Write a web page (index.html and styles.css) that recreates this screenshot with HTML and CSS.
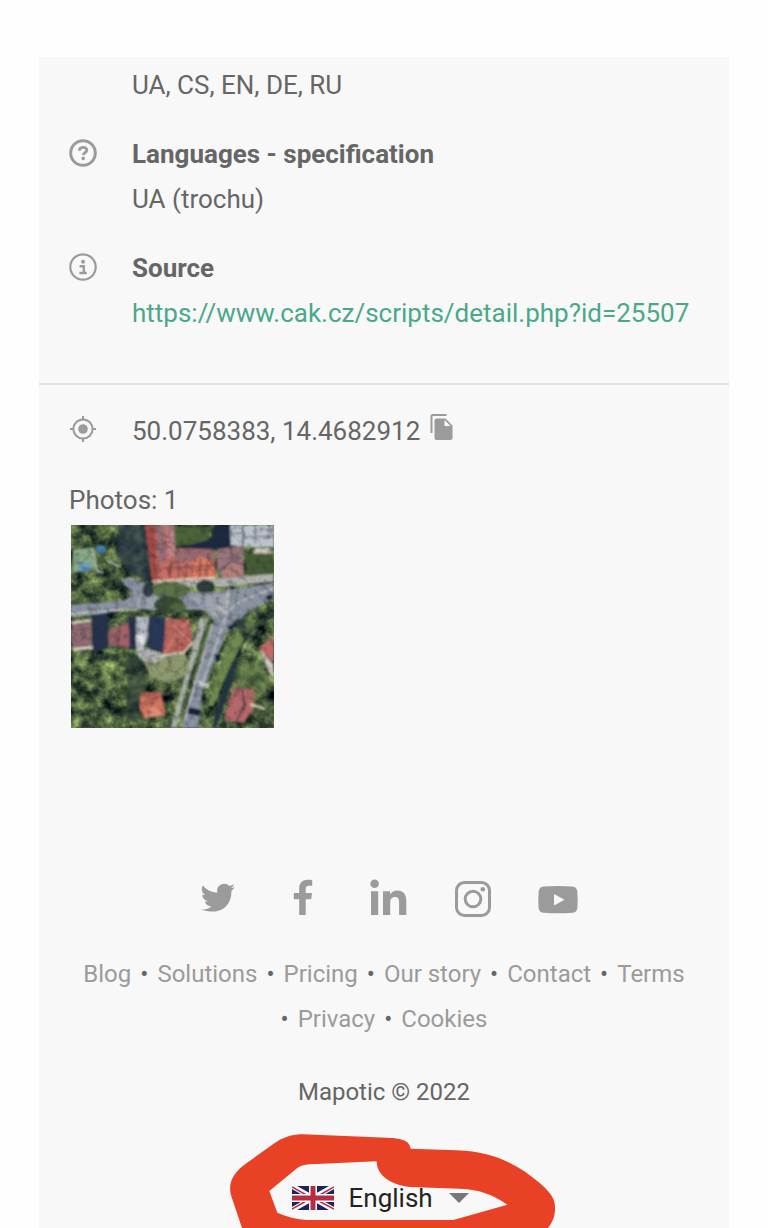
FILE: index.html
```html
<!DOCTYPE html>
<html lang="en">
<head>
  <meta charset="UTF-8">
  <meta name="viewport" content="width=device-width, initial-scale=1.0">
  <title>Mapotic</title>
  <link rel="stylesheet" href="styles.css">
</head>
<body>
  <div class="panel">
    <main>
      <section class="details">
        <div class="item">
          <div class="item-body">
            <p>UA, CS, EN, DE, RU</p>
          </div>
        </div>
        <div class="item">
          <svg class="item-icon" viewBox="0 0 28 28" fill="none" stroke="#9b9b9b">
            <circle cx="14" cy="14" r="12.3" stroke-width="3"/>
            <path d="M10.4 11.8c0-4.5 7.4-4.5 7.4-.6 0 2.5-3.3 2.4-3.5 5" stroke-width="2.8"/>
            <circle cx="14.2" cy="19.4" r="1.8" fill="#9b9b9b" stroke="none"/>
          </svg>
          <div class="item-body">
            <h2>Languages - specification</h2>
            <p>UA (trochu)</p>
          </div>
        </div>
        <div class="item">
          <svg class="item-icon" viewBox="0 0 28 28" fill="none" stroke="#9b9b9b">
            <circle cx="14" cy="14" r="12.7" stroke-width="2.2"/>
            <circle cx="14" cy="8.8" r="2" fill="#9b9b9b" stroke="none"/>
            <path d="M10.6 13.2h4.2v6.600M10.4 20h7.400" stroke-width="2.4"/>
          </svg>
          <div class="item-body">
            <h2>Source</h2>
            <p><a class="source-link" href="https://www.cak.cz/scripts/detail.php?id=25507">https://www.cak.cz/scripts/detail.php?id=25507</a></p>
          </div>
        </div>
      </section>

      <section class="location">
        <div class="item">
          <svg class="item-icon" viewBox="0 0 28 28" fill="none" stroke="#9b9b9b" stroke-width="2">
            <circle cx="14" cy="14" r="9.600"/>
            <circle cx="14" cy="14" r="4.800" fill="#9b9b9b" stroke="none"/>
            <path d="M14 1v4M14 23v4M1 14h4M23 14h4"/>
          </svg>
          <div class="item-body coords">
            <span>50.0758383, 14.4682912</span>
            <button class="copy" type="button" aria-label="Copy coordinates">
              <svg viewBox="0 0 22 26" fill="#9b9b9b">
                <path d="M2 0h14v2H2v17H0V2a2 2 0 0 1 2-2z"/>
                <path fill-rule="evenodd" d="M6 4.500h9l7 7V24a2 2 0 0 1-2 2H6a2 2 0 0 1-2-2V6.500a2 2 0 0 1 2-2zM14 6v6h6z"/>
              </svg>
            </button>
          </div>
        </div>

        <h3 class="photos-title">Photos: 1</h3>
        <a class="photo" href="#photo" aria-label="Aerial photo">
          <svg viewBox="33 135 608 608" preserveAspectRatio="xMidYMid slice">
            <defs>
              <filter id="leaves" x="0" y="0" width="100%" height="100%" color-interpolation-filters="sRGB">
                <feTurbulence type="fractalNoise" baseFrequency=".024" numOctaves="4" seed="7"/>
                <feColorMatrix values="1 0 0 0 -.21  1.1 0 0 0 -.18  .55 0 0 0 -.04  0 0 0 0 1"/>
              </filter>
              <filter id="grain" x="0" y="0" width="100%" height="100%" color-interpolation-filters="sRGB">
                <feTurbulence type="fractalNoise" baseFrequency=".05" numOctaves="2" seed="3"/>
                <feColorMatrix values="0 0 0 0 .12  0 0 0 0 .13  0 0 0 0 .2  2 0 0 0 -.9"/>
              </filter>
              <filter id="soft"><feGaussianBlur stdDeviation="3"/></filter>
            </defs>
            <rect x="33" y="135" width="608" height="608" filter="url(#leaves)"/>
            <g filter="url(#soft)">
              <!-- shadows and hedges -->
              <path d="M175 135h85l12 170-60-25-40-50z" fill="#29364a" opacity=".7"/>
              <path d="M462 135h48l5 70-60 5-110-8 60-18 50-14z" fill="#1f2940"/>
              <path d="M95 400h50v105l-50 10zM205 410h25v95h-30z" fill="#25304a"/>
              <path d="M200 510l50 30 10 90-20 80-40 20z" fill="#2c3b38" opacity=".6"/>
              <path d="M615 418l-36 22-60 70-25 90-40 143h14l49-145 20-90 50-75 54-25v-12z" fill="#243442"/>
              <!-- playground -->
              <path d="M38 210l60-8 8 65-68 10z" fill="#86a985"/>
              <path d="M55 250l38-2-3 26-32 2z" fill="#6a9cc0"/>
              <path d="M110 196h26v22h-26z" fill="#4284ae"/>
              <path d="M98 205l14 68 18 5M142 242l38 18" stroke="#aeb4a4" stroke-width="6" fill="none"/>
              <!-- main road -->
              <path d="M33 374l155-12 26-14-6-20-28-30 30-6 45 18 20 20 170 8 196-30v45l-80 44-60 60-48 110-25 60-14 116h-52l35-122 44-130 20-70-28-32-152 2-60-8-100 18-90 8z" fill="#8b93a0"/>
              <path d="M230 355l60-8 4 34-60 6zM390 350l120-10-20 50-60 4z" fill="#9da3ad"/>
              <path d="M280 303l180-6 180-20v28l-190 18-170-5z" fill="#b0b2ab"/>
              <path d="M33 402l90-8 110-6" stroke="#c7ccc6" stroke-width="5" fill="none"/>
              <path d="M420 410l22 8-68 225-25 100h-18l42-150z" fill="#aab0a6"/>
              <path d="M452 428l-52 172" stroke="#577044" stroke-width="12"/>
              <path d="M457 430l-85 290M480 410l60-46 100-40M500 400l-60 175-12 30" stroke="#c4c8c8" stroke-width="4" fill="none"/>
              <path d="M505 320l-5 65M460 365l45 44M455 395l20 18" stroke="#bfc1bc" stroke-width="7"/>
              <!-- roadside grass -->
              <path d="M505 470l35-10 10 18-50 100-40 100-15-2 25-90z" fill="#6f8a4d"/>
              <path d="M530 560l70-20 30 70-40 50-60-30z" fill="#6b8650" opacity=".6"/>
              <path d="M245 530l130-10 15 55-60 35-60-20z" fill="#8e996e"/>
              <path d="M345 140h110l-10 40-60 15-38-5z" fill="#4b6337"/>
              <!-- long building -->
              <path d="M255 135h86l5 70 115 3 6 88-190 12z" fill="#bd6a61"/>
              <path d="M255 135h28l8 165h-15z" fill="#a84c44"/>
              <path d="M288 135h20l8 110h-20z" fill="#936f78"/>
              <path d="M318 135h22l4 90-22 10z" fill="#b98489"/>
              <path d="M345 208l114 2v26l-114 12z" fill="#986a70"/>
              <path d="M395 248l24-20 40 20 3 48h-62z" fill="#df7b61"/>
              <path d="M310 252l80-2 2 45-84 6z" fill="#c96f60"/>
              <path d="M265 150l25 8M266 175l26 8M268 200l25 8M270 225l25 8M272 250l25 8M300 160l34 16M302 190l32 14M310 265l150-8M330 252v44M355 250v44M378 250v44M420 232v62M440 245v50" stroke="#77444d" stroke-width="4"/>
              <path d="M276 305l110-8 80-4" stroke="#e2cfbc" stroke-width="6" fill="none"/>
              <path d="M470 208l78-12 4 90-66 10-16-30z" fill="#957479"/>
              <path d="M480 270l35-30 35 10v40l-62 6z" fill="#b07f7b"/>
              <path d="M512 198l4 45 35 12M515 243l-38 32" stroke="#63505f" stroke-width="5" fill="none"/>
              <!-- pale blocks -->
              <path d="M510 135h131v68l-90-4-40-4z" fill="#bcc4ca"/>
              <path d="M548 135v60M585 140v50M612 150h29M515 160h28M560 170h75" stroke="#838d99" stroke-width="6"/>
              <path d="M580 204h50v16h-50z" fill="#d3cdbd"/>
              <path d="M555 222h86v60l-84 5z" fill="#455c36"/>
              <!-- houses -->
              <path d="M35 432l58-6 2 75-60 4z" fill="#8f6a70"/>
              <path d="M33 428l58-8M40 508l58-6" stroke="#d7d2c2" stroke-width="9"/>
              <path d="M145 450l60-24 4 76-62-8z" fill="#a0646b"/>
              <path d="M180 430l-5 68" stroke="#7b4d5c" stroke-width="6"/>
              <path d="M228 410h38l-5 65-12 35h-20z" fill="#b5bbc4"/>
              <path d="M228 465h24v26h-24z" fill="#e2e3e2"/>
              <path d="M224 510l35-5 60 20-30 22-45-8z" fill="#b2b4b2"/>
              <path d="M266 408l50 2-4 110-50-16z" fill="#2a3859"/>
              <path d="M318 414l70 4 9 66-26 30-62 8z" fill="#b8635c"/>
              <path d="M318 414l38 40 32-36M356 454l-44 66M356 454l38 30" stroke="#d58477" stroke-width="5" fill="none"/>
              <path d="M300 527l72-10 25-30" stroke="#ddcfbc" stroke-width="6" fill="none"/>
              <path d="M242 640l62-6 12 70-64 10-14-34z" fill="#cf7560"/>
              <path d="M242 640l34 34 28-40z" fill="#b65f53"/>
              <path d="M276 674l40 32-62 6z" fill="#e28d75"/>
              <path d="M520 622l62 5-2 60-30 40-58-8 14-60z" fill="#b5686b"/>
              <path d="M545 622l8 55-26 48" stroke="#744653" stroke-width="7" fill="none"/>
              <path d="M570 672l44 14" stroke="#d7d0b0" stroke-width="8"/>
              <path d="M596 505l45-38v80z" fill="#c06a68"/>
              <path d="M600 510l40 42v45l-18-28z" fill="#d0c4bd"/>
              <!-- trees over the road -->
              <ellipse cx="330" cy="330" rx="60" ry="25" fill="#5c7346"/>
              <ellipse cx="327" cy="374" rx="45" ry="26" fill="#384b34"/>
              <ellipse cx="354" cy="382" rx="25" ry="14" fill="#52683c"/>
              <ellipse cx="436" cy="318" rx="28" ry="18" fill="#2f4037"/>
              <ellipse cx="543" cy="430" rx="26" ry="16" fill="#30403c"/>
              <ellipse cx="568" cy="433" rx="14" ry="14" fill="#5c7346"/>
              <ellipse cx="263" cy="330" rx="16" ry="22" fill="#2f3d4a"/>
              <!-- cars -->
              <path d="M385 680l38 8-6 20-34-8zM464 522h16v20h-16zM615 348l22-6v14l-16 6zM500 440l26-12 4 9-24 13z" fill="#19213b"/>
              <path d="M415 600l32 12-4 12-32-12z" fill="#c5c9d0"/>
            </g>
            <rect x="33" y="135" width="608" height="608" filter="url(#grain)" opacity=".4"/>
          </svg>
        </a>
      </section>
    </main>

    <footer>
      <div class="social">
        <a href="#twitter" aria-label="Twitter">
          <svg viewBox="0 0 40 40"><path d="M3 32.500c4.500.2 7.500-.8 10.500-3.100-3.600-.2-5.800-2.100-6.700-5 1.200.2 2.100.1 3.100-.2-3.800-1-5.700-3.700-5.700-7 1 .6 2 .8 3.100.9C3.900 15.700 2.800 12 4.800 8.500c3.800 4.400 8.500 6.900 14.500 7.300C18.200 10.300 22 6.800 26.300 6.800c2.100 0 3.700.8 5.100 2.200 1.600-.3 3.100-.9 4.500-1.700-.6 1.600-1.500 2.900-3 3.800 1.400-.1 2.700-.5 4-1.100-.9 1.500-2 2.700-3.500 3.800C33.900 28 23.500 39.500 3 32.500z"/></svg>
        </a>
        <a href="#facebook" aria-label="Facebook">
          <svg viewBox="0 0 40 40"><path d="M16.200 38V22.200h-5.400V16h5.400v-4.500c0-5.700 3.300-8.700 8.600-8.700 1.700 0 3 .1 4.400.3v5.600h-3c-2.900 0-3.500 1.300-3.500 3.500V16h6.300l-.8 6.200h-5.500V38z"/></svg>
        </a>
        <a href="#linkedin" aria-label="LinkedIn">
          <svg viewBox="0 0 40 40"><circle cx="6.600" cy="6.800" r="4.300"/><path d="M3 14.300h7.200V38H3zM15 14.300h7v3.300c1.200-2.200 3.700-4 7-4 7 0 9.300 4.400 9.300 11.200V38h-7.200V26c0-3.500-.5-6-4.100-6-3.500 0-4.800 2.400-4.800 6v12H15z"/></svg>
        </a>
        <a href="#instagram" aria-label="Instagram">
          <svg viewBox="0 0 40 40"><g class="outline"><rect x="3.500" y="5.500" width="33" height="33" rx="8"/><circle cx="20" cy="22" r="7.800"/></g><circle cx="29.800" cy="12.200" r="2.300"/></svg>
        </a>
        <a href="#youtube" aria-label="YouTube">
          <svg viewBox="0 0 40 40"><path fill-rule="evenodd" d="M6 9.500q14-1.200 28 0c4 .3 5 2.200 5.400 6q.6 7.500 0 15c-.4 3.600-2 5-5.400 5.300q-14 1-28 0c-3.400-.3-5-1.700-5.400-5.300q-.6-7.500 0-15c.4-3.800 1.400-5.700 5.400-6zM16 17v11.500l10.500-5.800z"/></svg>
        </a>
      </div>

      <nav class="links">
        <span><a href="#blog">Blog</a></span>
        <span>• <a href="#solutions">Solutions</a></span>
        <span>• <a href="#pricing">Pricing</a></span>
        <span>• <a href="#story">Our story</a></span>
        <span>• <a href="#contact">Contact</a></span>
        <span>• <a href="#terms">Terms</a></span>
        <span>• <a href="#privacy">Privacy</a></span>
        <span>• <a href="#cookies">Cookies</a></span>
      </nav>

      <p class="copyright">Mapotic © 2022</p>

      <div class="language">
        <svg class="marker" viewBox="0 0 1050 324">
          <path fill="#e94126" fill-rule="evenodd" d="M66 324L36 235C20 190 40 160 75 133L160 72C190 50 220 43 250 43L500 53C550 55 568 62 572 86L710 91C830 95 900 140 960 190C995 220 1006 240 1005 265C1006 290 995 310 984 324zM148 213L172 278C200 290 230 299 260 300H700L862 254C820 225 780 208 720 206L570 201C510 195 470 165 470 124L290 132C260 132 245 135 232 144z"/>
        </svg>
        <svg class="flag" viewBox="0 0 42 24">
          <path fill="#1d2459" d="M0 0h42v24H0z"/>
          <path stroke="#fff" stroke-width="5" d="M0 0l42 24M42 0L0 24"/>
          <path stroke="#b72c42" stroke-width="1.500" d="M0 1l18 10M42 1L26 10M0 23l16-9M42 23l-17-9"/>
          <path stroke="#fff" stroke-width="8" d="M21 0v24M0 12h42"/>
          <path stroke="#b72c42" stroke-width="5" d="M21 0v24M0 12h42"/>
        </svg>
        <select class="language-select" aria-label="Language">
          <option>English</option>
        </select>
        <svg class="arrow" viewBox="0 0 20 10"><path fill="#777" d="M0 0h20L10 10z"/></svg>
      </div>
    </footer>
  </div>
</body>
</html>
```
FILE: styles.css
```css
* { box-sizing: border-box; }
body { margin: 0; padding: 57px 39px 0; background: #fefefe; color: #666; font-family: Roboto, sans-serif; font-size: 26px; line-height: 45px; }
h2, h3, p { margin: 0; font-size: 26px; }
a { color: #9b9b9b; text-decoration: none; }
svg { display: block; }

.panel { min-height: calc(100vh - 57px); background: #f8f8f8; overflow: hidden; }
.details { display: flex; flex-direction: column; gap: 24px; padding: 6px 30px 47px; border-bottom: 2px solid #e4e4e4; }
.item { display: flex; }
.item-icon { flex: none; width: 28px; height: 28px; margin-top: 7px; }
.item-body { flex: 1; margin-left: 35px; min-width: 0; }
.item-body:first-child { margin-left: 63px; }
.source-link { color: #4aa88a; overflow-wrap: anywhere; }

.location { padding: 24px 30px 0; }
.location .item-icon { margin-top: 6px; }
.coords { display: flex; align-items: center; gap: 10px; }
.copy { padding: 0 0 10px; border: none; background: none; cursor: pointer; }
.copy svg { width: 23px; height: 26px; }
.photos-title { margin-top: 24px; font-weight: normal; }
.photo { display: block; width: 203px; height: 203px; margin: 2px 0 0 2px; }
.photo svg { width: 100%; height: 100%; }

footer { padding: 149px 30px 7px; text-align: center; font-size: 24px; }
.social { display: flex; justify-content: center; gap: 45px; padding-left: 8px; }
.social svg { width: 40px; height: 40px; fill: #9b9b9b; }
.social .outline { fill: none; stroke: #9b9b9b; stroke-width: 3; }
.links { display: flex; flex-wrap: wrap; justify-content: center; column-gap: 9px; margin-top: 35px; }
.links span { display: flex; gap: 9px; }
.copyright { margin-top: 28px; font-size: 24px; }

.language { position: relative; display: flex; justify-content: center; align-items: center; margin-top: 60px; padding-right: 8px; }
.language > * { position: relative; }
/* hand-drawn ring around the language switch */
.language .marker { position: absolute; left: 50%; bottom: -8px; width: 350px; height: 108px; margin-left: -164px; }
.flag { width: 42px; height: 24px; }
.language-select { height: 45px; margin: 0 15px; padding: 0; border: none; background: none; color: #222; font: 26px Roboto, sans-serif; appearance: none; cursor: pointer; }
.arrow { width: 20px; height: 10px; }
```
